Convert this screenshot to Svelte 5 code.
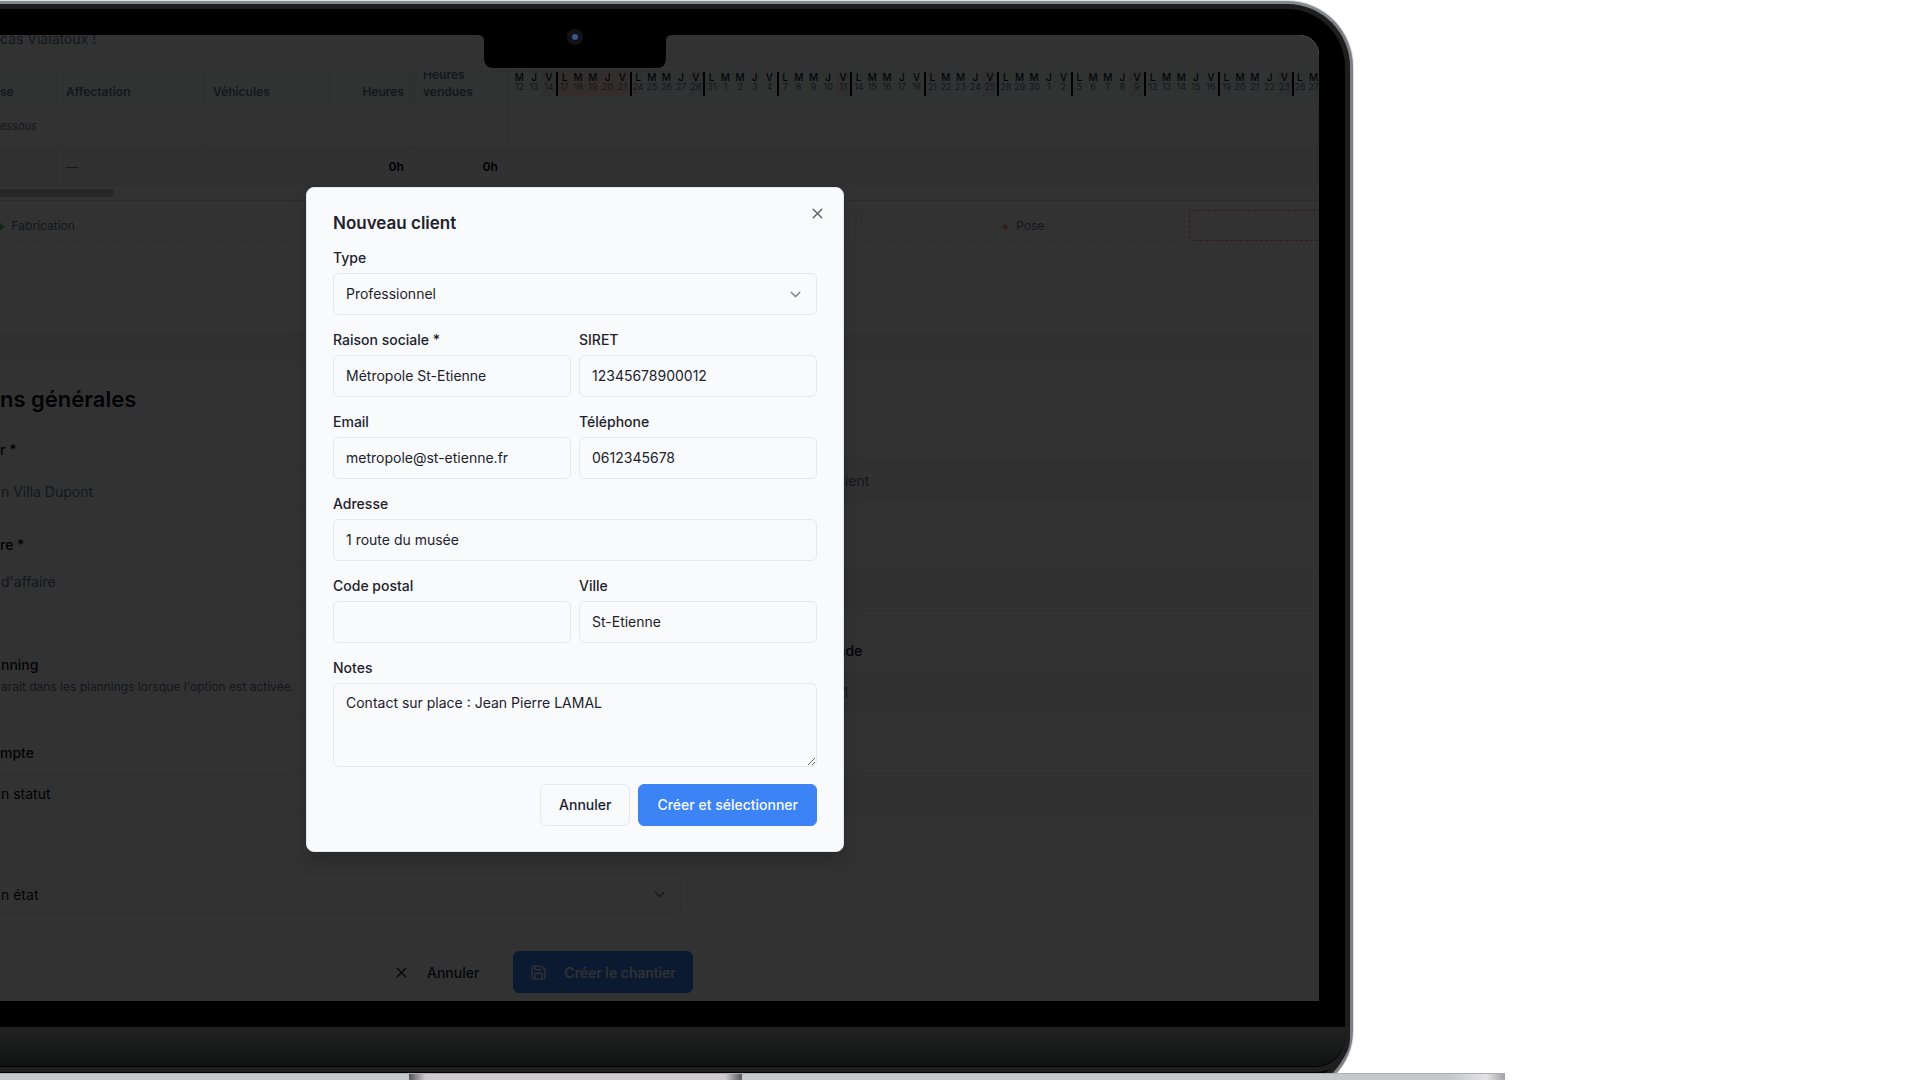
<script>
  let client = $state({
    type: 'Professionnel',
    raison: 'Métropole St-Etienne',
    siret: '12345678900012',
    email: 'metropole@st-etienne.fr',
    telephone: '0612345678',
    adresse: '1 route du musée',
    codePostal: '',
    ville: 'St-Etienne',
    notes: 'Contact sur place : Jean Pierre LAMAL'
  });

  // Working days only: every week starts on its "L" cell
  const weeks = [
    [12, 13, 14],
    [17, 18, 19, 20, 21],
    [24, 25, 26, 27, 28],
    [31, 1, 2, 3, 4],
    [7, 8, 9, 10, 11],
    [14, 15, 16, 17, 18],
    [21, 22, 23, 24, 25],
    [28, 29, 30, 1, 2],
    [5, 6, 7, 8, 9],
    [12, 13, 14, 15, 16],
    [19, 20, 21, 22, 23],
    [26, 27]
  ];
  const letters = ['L', 'M', 'M', 'J', 'V'];
  const hatchedWeeks = [0, 2, 4, 6, 8, 10];

  const days = weeks.flatMap((week, w) =>
    week.map((num, i) => {
      const pos = w === 0 ? i + 2 : i;
      return {
        num,
        letter: letters[pos],
        monday: pos === 0,
        closed: w === 1,
        hatched: pos === 4 && hatchedWeeks.includes(w)
      };
    })
  );

  const phases = [
    { label: 'Fabrication', color: 'green' },
    { label: '', color: '' },
    { label: '', color: '' },
    { label: 'Pose', color: 'orange' },
    { label: '', color: 'red' }
  ];
</script>

{#snippet cross()}
  <svg class="icon" viewBox="0 0 24 24" aria-hidden="true"><path d="M18 6 6 18M6 6l12 12" /></svg>
{/snippet}

{#snippet chevron()}
  <svg class="icon chevron" viewBox="0 0 24 24" aria-hidden="true"><path d="m6 9 6 6 6-6" /></svg>
{/snippet}

<div class="page">
  <div class="lid">
    <div class="screen">
      <div class="app">
        <p class="greeting">cas Vialatoux !</p>

        <table class="planning">
          <colgroup>
            <col class="c-phase" /><col class="c-affect" /><col class="c-vehicle" />
            <col class="c-hours" /><col class="c-sold" /><col />
          </colgroup>
          <thead>
            <tr>
              <th class="first"><div class="head">se</div></th>
              <th><div class="head">Affectation</div></th>
              <th><div class="head">Véhicules</div></th>
              <th class="num"><div class="head">Heures</div></th>
              <th><div class="head">Heures vendues</div></th>
              <th class="calendar">
                <div class="days">
                  {#each days as day}
                    <div class="day" class:monday={day.monday} class:closed={day.closed} class:hatched={day.hatched}>
                      <span class="letter">{day.letter}</span>
                      <span class="number">{day.num}</span>
                    </div>
                  {/each}
                </div>
              </th>
            </tr>
          </thead>
          <tbody>
            <tr class="hint">
              <td class="first" colspan="5">essous</td>
              <td></td>
            </tr>
            <tr class="total">
              <td></td>
              <td>—</td>
              <td class="open"></td>
              <td class="num">0h</td>
              <td class="num">0h</td>
              <td></td>
            </tr>
          </tbody>
        </table>
        <div class="scrollbar"><div class="thumb"></div></div>

        <div class="phases">
          {#each phases as phase}
            <button class="phase {phase.color}" aria-label={phase.label || 'Phase'}>
              {#if phase.label}<span class="plus">+</span>{phase.label}{/if}
            </button>
          {/each}
        </div>
        <div class="band"></div>

        <section class="general">
          <h2>ns générales</h2>
          <div class="columns">
            <div class="column left">
              <div class="group">
                <label for="nom">r *</label>
                <input id="nom" placeholder="n Villa Dupont" />
              </div>
              <div class="group tight">
                <label for="numero">re *</label>
                <input id="numero" placeholder="d'affaire" />
              </div>
              <div class="option">
                <strong>nning</strong>
                <p>araît dans les plannings lorsque l'option est activée.</p>
              </div>
              <div class="group">
                <label for="statut">mpte</label>
                <div class="select"><select id="statut"><option>n statut</option></select></div>
              </div>
              <div class="select last">
                <select aria-label="État"><option>n état</option></select>
                {@render chevron()}
              </div>
            </div>
            <div class="column right">
              <div class="group">
                <label for="client">Client</label>
                <input id="client" placeholder="Sélectionner un client" />
              </div>
              <div class="group far">
                <label for="date">Date</label>
                <input id="date" />
              </div>
              <div class="group">
                <label for="commande">Numéro de commande</label>
                <input id="commande" placeholder="Ex : CMD-2025-01" />
              </div>
              <div class="group">
                <label for="etat">État</label>
                <input id="etat" />
              </div>
            </div>
          </div>
        </section>

        <footer class="actions">
          <button class="btn outline wide">{@render cross()}Annuler</button>
          <button class="btn primary wide">
            <svg class="icon" viewBox="0 0 24 24" aria-hidden="true">
              <path d="M15.2 3a2 2 0 0 1 1.4.6l3.800 3.800a2 2 0 0 1 .6 1.400V19a2 2 0 0 1-2 2H5a2 2 0 0 1-2-2V5a2 2 0 0 1 2-2z" />
              <path d="M17 21v-7a1 1 0 0 0-1-1H8a1 1 0 0 0-1 1v7M7 3v4a1 1 0 0 0 1 1h7" />
            </svg>
            Créer le chantier
          </button>
        </footer>
      </div>

      <div class="overlay">
        <form class="modal" aria-labelledby="modal-title" onsubmit={(e) => e.preventDefault()}>
          <button type="button" class="close" aria-label="Fermer">{@render cross()}</button>
          <h1 id="modal-title">Nouveau client</h1>

          <div class="field full">
            <label for="m-type">Type</label>
            <div class="select">
              <select id="m-type" bind:value={client.type}>
                <option>Professionnel</option>
              </select>
              {@render chevron()}
            </div>
          </div>
          <div class="field">
            <label for="m-raison">Raison sociale *</label>
            <input id="m-raison" bind:value={client.raison} />
          </div>
          <div class="field">
            <label for="m-siret">SIRET</label>
            <input id="m-siret" bind:value={client.siret} />
          </div>
          <div class="field">
            <label for="m-email">Email</label>
            <input id="m-email" type="email" bind:value={client.email} />
          </div>
          <div class="field">
            <label for="m-tel">Téléphone</label>
            <input id="m-tel" type="tel" bind:value={client.telephone} />
          </div>
          <div class="field full">
            <label for="m-adresse">Adresse</label>
            <input id="m-adresse" bind:value={client.adresse} />
          </div>
          <div class="field">
            <label for="m-cp">Code postal</label>
            <input id="m-cp" bind:value={client.codePostal} />
          </div>
          <div class="field">
            <label for="m-ville">Ville</label>
            <input id="m-ville" bind:value={client.ville} />
          </div>
          <div class="field full">
            <label for="m-notes">Notes</label>
            <textarea id="m-notes" bind:value={client.notes}></textarea>
          </div>

          <div class="buttons full">
            <button type="button" class="btn outline">Annuler</button>
            <button type="submit" class="btn primary">Créer et sélectionner</button>
          </div>
        </form>
      </div>
    </div>
    <svg class="notch" viewBox="0 0 194 33" aria-hidden="true">
      <path d="M0 0Q6 0 6 6V23Q6 33 16 33H178Q188 33 188 23V6Q188 0 194 0Z" fill="#000" />
      <circle cx="97" cy="2" r="8" fill="#131317" />
      <circle cx="97" cy="2" r="3" fill="#36568c" />
    </svg>
    <div class="chin"></div>
  </div>
  <div class="base"><div class="groove"></div></div>
</div>

<style>
  :global(body) {
    margin: 0;
    background: #fff;
  }

  .page {
    height: 100vh;
    overflow: hidden;
    font-family: Inter, 'Liberation Sans', sans-serif;
    font-size: 14px;
    color: #1e222d;
  }
  .page :global(*) {
    box-sizing: border-box;
  }
  button, input, select, textarea {
    font: inherit;
    color: inherit;
  }
  p, h1, h2 {
    margin: 0;
  }

  /* laptop */
  .lid {
    position: relative;
    width: calc(100% - 364px);
    margin: 1px 0 0 -203px;
    padding: 31px 31px 18px;
    border: 3px solid #7f7e84;
    border-top-color: #85898c;
    border-radius: 66px 66px 62px 62px;
    background: #000;
    box-shadow: inset 0 0 0 5px #1e1e1f, 0 0 0 1px #dfe2e3;
  }
  .screen {
    position: relative;
    height: 966px;
    overflow: hidden;
    clip-path: inset(0 round 20px 20px 0 0);
    background: #fafafb;
  }
  .notch {
    position: absolute;
    top: 31px;
    left: 50%;
    width: 194px;
    height: 33px;
    margin-left: -97px;
    overflow: visible;
  }
  .chin {
    height: 45px;
    margin: 26px -31px 0;
    border: 5px solid #1f1f20;
    border-top: 0;
    border-radius: 0 0 34px 34px;
    background: linear-gradient(#232323, #0f1211);
    box-shadow: inset 0 -1px 0 #000;
  }
  .base {
    position: relative;
    display: flex;
    justify-content: center;
    width: calc(100% - 61px);
    height: 20px;
    margin: -20px 0 0 -354px;
    border-top: 1px solid #aeaeb2;
    background: linear-gradient(90deg, #c6c7cb 97%, #e4e4e6 99%, #a2a2a7);
  }
  .groove {
    width: 333px;
    border-radius: 0 0 16px 16px;
    background: linear-gradient(90deg, #55555a, #cdcbd1 5%, #cdcbd1 95%, #55555a);
  }

  /* planning table */
  .app {
    margin-top: -6px;
  }
  .greeting {
    height: 43px;
    padding-left: 169px;
    border-bottom: 1px solid #e0e4ea;
    line-height: 20px;
    color: #64748b;
  }
  .planning {
    width: 100%;
    table-layout: fixed;
    border-spacing: 0;
    font-size: 12px;
    line-height: 17px;
    color: #64748b;
  }
  .c-phase { width: 226px; }
  .c-affect { width: 147px; }
  .c-vehicle { width: 126px; }
  .c-hours { width: 84px; }
  .c-sold { width: 94px; }
  th, td {
    padding: 0 9px;
    border-right: 1px solid #e0e4ea;
    border-bottom: 1px solid #e0e4ea;
    text-align: left;
  }
  th {
    background: #f6f7f9;
    font-weight: 600;
  }
  .first {
    padding-left: 169px;
  }
  .head {
    display: flex;
    align-items: flex-end;
    height: 32px;
    padding-bottom: 4px;
    overflow: hidden;
  }
  .num {
    text-align: right;
  }
  .num .head {
    justify-content: flex-end;
  }
  .calendar {
    padding: 0 0 0 4px;
    border-right: 0;
    vertical-align: top;
  }
  .days {
    display: grid;
    grid-template-columns: repeat(55, minmax(0, 1fr));
    margin-right: -2px;
  }
  .day {
    display: flex;
    flex-direction: column;
    align-items: center;
    height: 24px;
    font-weight: 400;
    line-height: 10px;
    white-space: nowrap;
  }
  .monday { border-left: 2px solid #000; }
  .closed { background: #fde2e2; }
  .hatched {
    background: repeating-linear-gradient(135deg, #eff0f2 0 4px, #dfe1e6 4px 6px);
  }
  .letter {
    font-size: 10px;
    font-weight: 500;
    color: #0f172a;
  }
  .number {
    font-size: 9px;
  }
  .hint td {
    height: 43px;
    font-size: 11px;
    font-style: italic;
  }
  .total td {
    height: 38px;
    background: #f5f6f8;
  }
  .total .open {
    border-right: 0;
  }
  .total .num {
    font-weight: 700;
    color: #0f172a;
  }
  .scrollbar {
    padding: 3px 0;
    border-bottom: 1px solid #d6dae1;
  }
  .thumb {
    width: 283px;
    height: 8px;
    border-radius: 4px;
    background: #c3c4c6;
  }

  .phases {
    display: flex;
    gap: 4px;
    height: 134px;
    padding: 9px 0 0 42px;
    border-bottom: 1px solid #e0e4ea;
  }
  .phase {
    display: flex;
    align-items: center;
    justify-content: center;
    gap: 6px;
    flex: 0 0 325px;
    height: 31px;
    border: 1px dashed #dfe3e9;
    border-radius: 4px;
    background: none;
    font-size: 12px;
    line-height: 17px;
    color: #64748b;
  }
  .plus {
    font-size: 14px;
    font-weight: 600;
  }
  .green .plus { color: #22c55e; }
  .orange .plus { color: #ff8a3c; }
  .red { border-color: #f0808a; }
  .band {
    height: 26px;
    border-bottom: 1px solid #e0e4ea;
    background: #f6f6f7;
  }

  /* form behind the dialog */
  .general {
    padding-top: 22px;
    color: #0b0f19;
  }
  h2 {
    padding-left: 169px;
    font-size: 22px;
    font-weight: 600;
    line-height: 32px;
  }
  .columns {
    display: grid;
    grid-template-columns: 809px 1fr;
    gap: 24px;
    margin: 0 -20px 0 41px;
    border-bottom: 1px solid #e6e9ee;
    padding-bottom: 23px;
  }
  .column {
    display: flex;
    flex-direction: column;
    gap: 29px;
  }
  .left {
    gap: 0;
    padding-top: 25px;
  }
  .right {
    padding-top: 14px;
  }
  .group {
    display: flex;
    flex-direction: column;
    gap: 10px;
    line-height: 20px;
  }
  .tight {
    gap: 5px;
    margin-top: 23px;
  }
  .far {
    margin-top: 10px;
  }
  label, strong {
    font-weight: 500;
  }
  .left label {
    padding-left: 128px;
  }
  .right label {
    padding-left: 5px;
  }
  input, select {
    width: 100%;
    height: 42px;
    padding: 0 12px;
    border: 1px solid #e6e8ed;
    border-radius: 6px;
    background: transparent;
  }
  .column input, .column select {
    border-color: #e0e4ea;
  }
  .left input, .left select {
    padding-left: 128px;
  }
  .right input {
    padding-left: 20px;
    background: #f5f6f7;
  }
  input::placeholder {
    color: #64748b;
    opacity: 1;
  }
  .option {
    height: 75px;
    margin: 36px 0 30px;
    padding: 16px 0 0 128px;
    border: 1px solid #e0e4ea;
    border-radius: 6px;
    line-height: 20px;
  }
  .option p {
    font-size: 12px;
    line-height: 24px;
    color: #64748b;
  }
  .select {
    position: relative;
  }
  .last {
    margin-top: 58px;
  }
  select {
    appearance: none;
  }
  .icon {
    width: 17px;
    height: 17px;
    fill: none;
    stroke: currentColor;
    stroke-width: 2;
    stroke-linecap: round;
    stroke-linejoin: round;
  }
  .chevron {
    position: absolute;
    top: 13px;
    right: 13px;
    opacity: 0.5;
    pointer-events: none;
  }

  .actions {
    display: flex;
    gap: 17px;
    padding: 12px 0 0 545px;
  }
  .btn {
    display: flex;
    align-items: center;
    justify-content: center;
    height: 42px;
    padding: 0 18px;
    border: 1px solid #e6e8ed;
    border-radius: 6px;
    background: none;
    font-weight: 500;
    white-space: nowrap;
  }
  .wide {
    gap: 17px;
    padding: 0 16px;
  }
  .primary {
    border-color: #3c83f6;
    background: #3c83f6;
    color: #f8fafc;
  }

  /* dialog */
  .overlay {
    position: absolute;
    inset: 0;
    display: flex;
    align-items: center;
    justify-content: center;
    padding-top: 2px;
    background: rgba(0, 0, 0, 0.8);
  }
  .modal {
    position: relative;
    display: grid;
    grid-template-columns: 1fr 1fr;
    gap: 17px 8px;
    width: 538px;
    padding: 26px 26px 25px;
    border: 1px solid #e2e5ea;
    border-radius: 8px;
    background: #f9fafc;
    box-shadow: 0 10px 15px rgba(0, 0, 0, 0.15);
  }
  h1 {
    grid-column: 1 / -1;
    font-size: 17px;
    font-weight: 600;
    line-height: 19px;
  }
  .full {
    grid-column: 1 / -1;
  }
  .field {
    display: flex;
    flex-direction: column;
    gap: 8px;
    line-height: 15px;
  }
  textarea {
    display: block;
    height: 84px;
    padding: 8px 12px;
    border: 1px solid #e6e8ed;
    border-radius: 6px;
    background: transparent;
    line-height: 21px;
    resize: vertical;
  }
  .buttons {
    display: flex;
    justify-content: flex-end;
    gap: 8px;
  }
  .close {
    position: absolute;
    top: 17px;
    right: 17px;
    display: flex;
    padding: 0;
    border: 0;
    background: none;
    opacity: 0.7;
  }
</style>
